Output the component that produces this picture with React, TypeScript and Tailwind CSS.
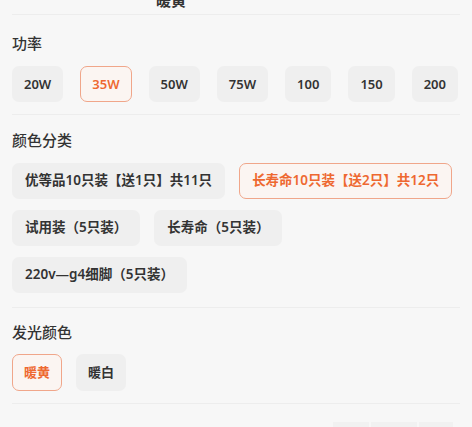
import type { FC } from "react";

const font = { fontFamily: '"Noto Sans", "Noto Sans CJK SC", sans-serif' };

interface OptionProps {
    label: string;
    active?: boolean;
    tall?: boolean;
    wide?: boolean;
}

const Option: FC<OptionProps> = ({ label, active, tall, wide }) => (
    <button
        type="button"
        className={
            (tall ? "h-[37px] " : "h-[36px] ") +
            (wide ? "px-[12px] text-[13.5px] " : "px-[11px] text-[13px] ") +
            (active
                ? "border border-[#f0a68a] bg-[#fbf5f2] text-[#ee6830] "
                : "border border-transparent bg-[#efefef] text-[#333333] ") +
            "shrink-0 whitespace-nowrap rounded-[7px] font-semibold leading-none"
        }
    >
        {label}
    </button>
);

const powers = ["20W", "35W", "50W", "75W", "100", "150", "200"];
const kinds = [
    "优等品10只装【送1只】共11只",
    "长寿命10只装【送2只】共12只",
    "试用装（5只装）",
    "长寿命（5只装）",
    "220v—g4细脚（5只装）",
];

export default function App() {
    return (
        <div className="h-[427px] w-[472px] overflow-hidden bg-[#f7f7f7]" style={font}>
            {/* cut-off row above */}
            <div className="mx-3 h-[15px] overflow-hidden border-b border-[#ededed]">
                <p className="-mt-[9px] ml-[144px] text-[15px] font-semibold leading-[18px] text-[#333]">暖黄</p>
            </div>

            {/* 功率 */}
            <div className="mx-3 border-b border-[#ededed] pb-[12px] pt-[18px]">
                <h3 className="text-[15px] font-medium leading-[20px] text-[#333]">功率</h3>
                <div className="mt-[13px] flex justify-between pr-[2px]">
                    {powers.map((p) => (
                        <Option key={p} label={p} active={p === "35W"} />
                    ))}
                </div>
            </div>

            {/* 颜色分类 */}
            <div className="mx-3 border-b border-[#ededed] pb-[14px] pt-[15px]">
                <h3 className="text-[15px] font-medium leading-[20px] text-[#333]">颜色分类</h3>
                <div className="mt-[13px] flex flex-wrap gap-x-[14px] gap-y-[11px]">
                    {kinds.map((k, i) => (
                        <Option key={k} label={k} active={i === 1} wide />
                    ))}
                </div>
            </div>

            {/* 发光颜色 */}
            <div className="mx-3 border-b border-[#ededed] pb-[12px] pt-[14px]">
                <h3 className="text-[15px] font-medium leading-[20px] text-[#333]">发光颜色</h3>
                <div className="mt-[12px] flex gap-[14px]">
                    <Option label="暖黄" active tall />
                    <Option label="暖白" tall />
                </div>
            </div>

            <div className="mt-[18px] flex justify-end gap-[2px] pr-[19px]">
                <div className="h-[6px] w-[36px] bg-[#f1f1f1]" />
                <div className="h-[6px] w-[46px] bg-[#f1f1f1]" />
                <div className="h-[6px] w-[34px] bg-[#f1f1f1]" />
            </div>
        </div>
    );
}
